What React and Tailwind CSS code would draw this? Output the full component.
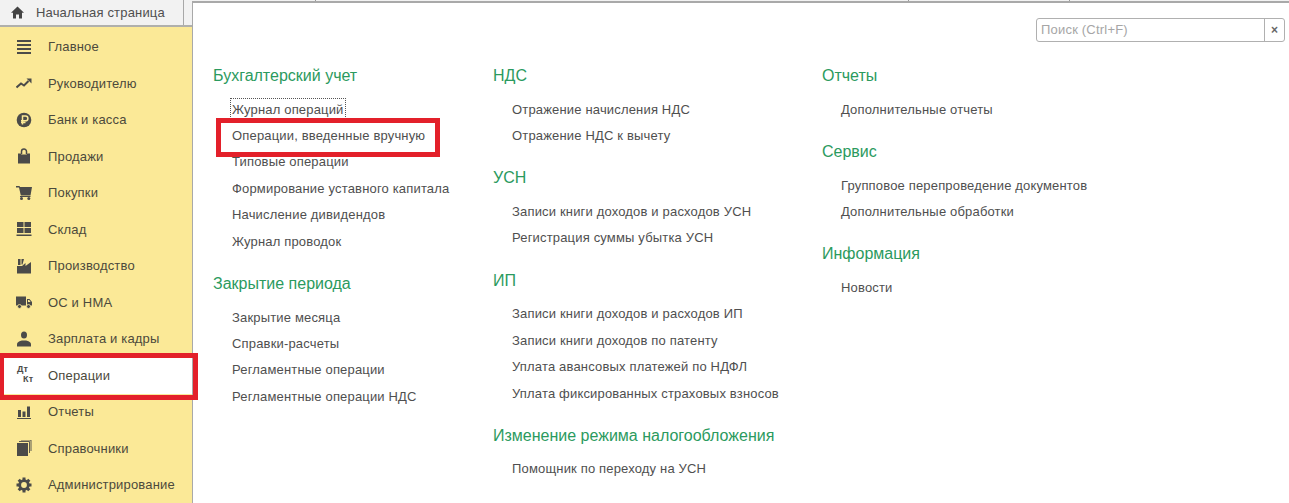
import React from "react";

const ICON = "#4b4b49";

const Svg = ({ children }) => (
  <svg width="16" height="16" viewBox="0 0 16 16" fill={ICON} className="shrink-0">
    {children}
  </svg>
);

const icons = {
  menu: (
    <Svg>
      <path d="M1 1h14v2H1zM1 5h14v2H1zM1 9h14v2H1zM1 13h14v2H1z" />
    </Svg>
  ),
  trend: (
    <Svg>
      <path d="M0.500 12.500 5 8.500 8 10.500 12.500 6" fill="none" stroke={ICON} strokeWidth="2" />
      <path d="M10.500 3.500h5v5z" />
    </Svg>
  ),
  ruble: (
    <Svg>
      <circle cx="8" cy="8" r="7.300" />
      <path d="M6.500 12.500V4h3a2.400 2.400 0 0 1 0 4.800h-4.500M5 10.600h4.500" fill="none" stroke="#fbe997" strokeWidth="1.500" />
    </Svg>
  ),
  bag: (
    <Svg>
      <path d="M2 5.500h2.500l1 1h5l1-1H14v10H2z" />
      <path d="M5.500 6V3.500a2.500 2.500 0 0 1 5 0V6" fill="none" stroke={ICON} strokeWidth="1.500" />
    </Svg>
  ),
  cart: (
    <Svg>
      <path d="M0 1h3.500l.5 1h12l-1.500 8.500H4.800L3 2.500H0z" />
      <rect x="4" y="11" width="10.500" height="1" />
      <circle cx="5.500" cy="13.600" r="1.500" />
      <circle cx="12.800" cy="13.600" r="1.500" />
    </Svg>
  ),
  warehouse: (
    <Svg>
      <path d="M1 1h6.500v5H1zM8.500 1H15v5H8.500zM1 7h6.500v5H1zM8.500 7H15v5H8.500zM0.500 13.500h15v1.500H.5z" />
    </Svg>
  ),
  factory: (
    <Svg>
      <path d="M2 1h2.500v6H2zM5.500 1H8L6.500 6.500h-1z" />
      <path d="M1 15.500V8h5l3.500-3v3L15 4v11.500z" />
    </Svg>
  ),
  truck: (
    <Svg>
      <path d="M0 2.500h10v9H0zM11 5h2.500L16 8v3.500h-5z" />
      <circle cx="3.500" cy="12.500" r="2" stroke="#fbe997" strokeWidth=".8" />
      <circle cx="12.500" cy="12.500" r="2" stroke="#fbe997" strokeWidth=".8" />
      <path d="M12 6h1.200l1.400 2H12z" fill="#fbe997" />
    </Svg>
  ),
  person: (
    <Svg>
      <ellipse cx="8" cy="4" rx="3" ry="3.600" />
      <path d="M1 15.500v-2.200c0-2.200 3-3.300 4.800-3.800h4.400c1.800.5 4.800 1.600 4.800 3.800v2.200z" />
    </Svg>
  ),
  chart: (
    <Svg>
      <path d="M2 6h3v7H2zM6.500 7.500h3V13h-3zM11 2.500h3V13h-3zM1 14h14v1H1z" />
    </Svg>
  ),
  books: (
    <Svg>
      <rect x="1" y="3" width="11" height="13" />
      <path d="M3 1.500h10.500V13M5 0h10v11" fill="none" stroke={ICON} strokeWidth=".9" />
    </Svg>
  ),
  gear: (
    <Svg>
      <circle cx="8" cy="8" r="4.300" fill="none" stroke={ICON} strokeWidth="2.800" />
      <rect x="6.500" y="0.500" width="3" height="3" />
      <rect x="6.500" y="12.500" width="3" height="3" />
      <rect x="0.500" y="6.500" width="3" height="3" />
      <rect x="12.500" y="6.500" width="3" height="3" />
      <rect x="6.500" y="0.500" width="3" height="3" transform="rotate(45 8 8)" />
      <rect x="6.500" y="12.500" width="3" height="3" transform="rotate(45 8 8)" />
      <rect x="0.500" y="6.500" width="3" height="3" transform="rotate(45 8 8)" />
      <rect x="12.500" y="6.500" width="3" height="3" transform="rotate(45 8 8)" />
    </Svg>
  ),
};

const sidebar = [
  ["Главное", "menu"],
  ["Руководителю", "trend"],
  ["Банк и касса", "ruble"],
  ["Продажи", "bag"],
  ["Покупки", "cart"],
  ["Склад", "warehouse"],
  ["Производство", "factory"],
  ["ОС и НМА", "truck"],
  ["Зарплата и кадры", "person"],
  ["Операции", "dtkt"],
  ["Отчеты", "chart"],
  ["Справочники", "books"],
  ["Администрирование", "gear"],
];

const columns = [
  {
    width: "w-[280px]",
    sections: [
      {
        title: "Бухгалтерский учет",
        links: [
          "Журнал операций",
          "Операции, введенные вручную",
          "Типовые операции",
          "Формирование уставного капитала",
          "Начисление дивидендов",
          "Журнал проводок",
        ],
      },
      {
        title: "Закрытие периода",
        links: ["Закрытие месяца", "Справки-расчеты", "Регламентные операции", "Регламентные операции НДС"],
      },
    ],
  },
  {
    width: "w-[329px]",
    sections: [
      { title: "НДС", links: ["Отражение начисления НДС", "Отражение НДС к вычету"] },
      { title: "УСН", links: ["Записи книги доходов и расходов УСН", "Регистрация суммы убытка УСН"] },
      {
        title: "ИП",
        links: [
          "Записи книги доходов и расходов ИП",
          "Записи книги доходов по патенту",
          "Уплата авансовых платежей по НДФЛ",
          "Уплата фиксированных страховых взносов",
        ],
      },
      { title: "Изменение режима налогообложения", links: ["Помощник по переходу на УСН"] },
    ],
  },
  {
    width: "w-[300px]",
    sections: [
      { title: "Отчеты", links: ["Дополнительные отчеты"] },
      { title: "Сервис", links: ["Групповое перепроведение документов", "Дополнительные обработки"] },
      { title: "Информация", links: ["Новости"] },
    ],
  },
];

function SideRow({ label, icon }) {
  const active = icon === "dtkt";
  return (
    <div className={`relative h-[36.5px] flex items-center gap-4 px-4 text-[13px] tracking-[0.17px] ${active ? "bg-white" : ""}`}>
      {active ? (
        <span className="w-4 h-4 shrink-0 relative block text-[9px] leading-[9px] font-bold text-[#4b4b49]">
          <span className="absolute left-[1px] top-[-2px]">Дт</span>
          <span className="absolute left-[7px] top-[8px]">Кт</span>
        </span>
      ) : (
        icons[icon]
      )}
      <span>{label}</span>
      {active && (
        <div className="absolute left-0 top-[-4.5px] w-[198px] h-[47px] border-[5px] border-l-4 border-[#e3202a] z-10 pointer-events-none" />
      )}
    </div>
  );
}

function Link({ text }) {
  const focused = text === "Журнал операций";
  const marked = text === "Операции, введенные вручную";
  return (
    <div className="relative h-[26.4px] flex items-center pl-[19px] text-[13px] tracking-[0.17px] text-[#4f4f4f] whitespace-nowrap">
      <span className={focused ? "outline-1 outline-dotted outline-[#555] px-[1px] -ml-[1px] py-[1px]" : ""}>{text}</span>
      {marked && (
        <div className="absolute left-[3px] top-[-4.4px] w-[224px] h-[39px] border-[5px] border-[#e3202a]" />
      )}
    </div>
  );
}

export default function App() {
  return (
    <div className="flex w-[1289px] h-[503px] overflow-hidden bg-[#f2f2f2] font-['Liberation_Sans',Arial,sans-serif] text-[#4c4a3c]">
      <aside className="w-[192px] shrink-0 flex flex-col">
        <div className="h-[29px] flex border-b-2 border-[#b0b0ac]">
          <div className="w-[184px] flex items-center gap-[12px] pl-[11px] border-r border-[#a8a8a8] text-[13px] tracking-[0.17px] text-[#4f4f4f]">
            <svg width="13" height="13" viewBox="0 0 13 13" fill="#444" className="shrink-0">
              <path d="M6.500.5 13 6.800h-2V12.500H8V8.500H5v4H2V6.800H0z" />
            </svg>
            <span>Начальная страница</span>
          </div>
        </div>
        <nav className="flex-1 pt-[2px] bg-[#fbe997]">
          {sidebar.map(([label, icon]) => (
            <SideRow key={label} label={label} icon={icon} />
          ))}
        </nav>
      </aside>

      <div className="flex-1 flex flex-col min-w-0">
        <div className="h-[1px] flex shrink-0">
          <div className="w-[124px] border-r border-[#999]" />
          <div className="w-[593px] border-r border-[#999]" />
          <div className="w-[161px] border-r border-[#999]" />
        </div>
        <main className="flex-1 bg-white border-l border-t-2 border-[#a9a9a9]">
          <div className="flex justify-end pt-[15px] pr-1">
            <div className="w-[249px] h-[24px] flex rounded-[3px] border border-[#b0b0b0] text-[13px] tracking-[0.2px] text-[#a6a6a6]">
              <div className="flex-1 flex items-center pl-1">Поиск (Ctrl+F)</div>
              <div className="w-[20px] flex items-center justify-center border-l border-[#b0b0b0] text-[#666] text-[12px] font-bold">
                ×
              </div>
            </div>
          </div>
          <div className="flex pl-[20px] pt-[22px]">
            {columns.map((col) => (
              <div key={col.width} className={`${col.width} shrink-0 flex flex-col gap-[17.4px]`}>
                {col.sections.map((s) => (
                  <section key={s.title}>
                    <h2 className="h-6 mb-[8.2px] flex items-center text-[16px] text-[#2b9a5e] whitespace-nowrap">{s.title}</h2>
                    {s.links.map((l) => (
                      <Link key={l} text={l} />
                    ))}
                  </section>
                ))}
              </div>
            ))}
          </div>
        </main>
      </div>
    </div>
  );
}
